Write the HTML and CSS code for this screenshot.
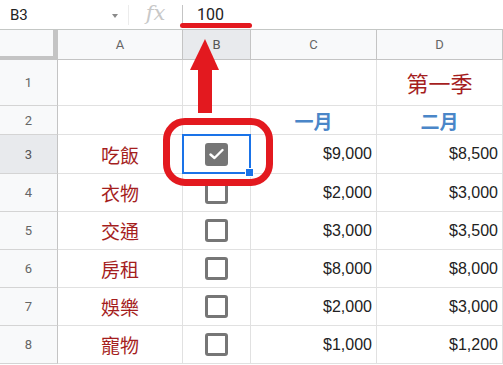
FILE: index.html
```html
<!DOCTYPE html>
<html lang="zh-Hant">
<head>
    <meta charset="UTF-8">
    <meta name="viewport" content="width=device-width, initial-scale=1.0">
    <title>試算表</title>
    <link rel="stylesheet" href="styles.css">
</head>
<body>
<div class="formula-bar">
    <div class="namebox">
        <span>B3</span>
        <span class="caret"></span>
    </div>
    <div class="sep"></div>
    <div class="fx">fx</div>
    <div class="sep tall"></div>
    <div class="value">100</div>
</div>

<div class="sheet">
    <!-- header row -->
    <div class="corner"></div>
    <div class="col-head">A</div>
    <div class="col-head active">B</div>
    <div class="col-head">C</div>
    <div class="col-head">D</div>

    <!-- row 1 -->
    <div class="row-head">1</div>
    <div class="cell"></div>
    <div class="cell"></div>
    <div class="cell"></div>
    <div class="cell title">第一季</div>

    <!-- row 2 -->
    <div class="row-head">2</div>
    <div class="cell"></div>
    <div class="cell"></div>
    <div class="cell month">一月</div>
    <div class="cell month">二月</div>

    <!-- row 3 -->
    <div class="row-head active">3</div>
    <div class="cell item">吃飯</div>
    <div class="cell box selected">
        <span class="check on">
            <svg width="15" height="12" viewBox="0 0 15 12"><polyline points="1.5,6.5 5.5,10 13.5,2" fill="none" stroke="#fff" stroke-width="2.4" stroke-linecap="round" stroke-linejoin="round"/></svg>
        </span>
        <span class="handle"></span>
    </div>
    <div class="cell num">$9,000</div>
    <div class="cell num">$8,500</div>

    <!-- row 4 -->
    <div class="row-head">4</div>
    <div class="cell item">衣物</div>
    <div class="cell box"><span class="check"></span></div>
    <div class="cell num">$2,000</div>
    <div class="cell num">$3,000</div>

    <!-- row 5 -->
    <div class="row-head">5</div>
    <div class="cell item">交通</div>
    <div class="cell box"><span class="check"></span></div>
    <div class="cell num">$3,000</div>
    <div class="cell num">$3,500</div>

    <!-- row 6 -->
    <div class="row-head">6</div>
    <div class="cell item">房租</div>
    <div class="cell box"><span class="check"></span></div>
    <div class="cell num">$8,000</div>
    <div class="cell num">$8,000</div>

    <!-- row 7 -->
    <div class="row-head">7</div>
    <div class="cell item">娛樂</div>
    <div class="cell box"><span class="check"></span></div>
    <div class="cell num">$2,000</div>
    <div class="cell num">$3,000</div>

    <!-- row 8 -->
    <div class="row-head">8</div>
    <div class="cell item">寵物</div>
    <div class="cell box"><span class="check"></span></div>
    <div class="cell num">$1,000</div>
    <div class="cell num">$1,200</div>
</div>

<!-- annotations drawn over the sheet -->
<div class="underline"></div>
<svg class="arrow" width="30" height="75" viewBox="0 0 30 75">
    <polygon points="15,0 29,31 0,31" fill="#e3191f"/>
    <rect x="8" y="29" width="14" height="45" fill="#e3191f"/>
</svg>
<div class="ring"></div>
</body>
</html>
```
FILE: styles.css
```css
body {
    margin: 0;
    width: 503px;
    height: 365px;
    overflow: hidden;
    background: #fff;
    font-family: Arial, "Liberation Sans", sans-serif;
    position: relative;
}

.formula-bar {
    display: flex;
    align-items: center;
    height: 30px;
    box-sizing: border-box;
    border-bottom: 1px solid #c4c7c5;
}

.namebox {
    width: 128px;
    display: flex;
    align-items: center;
    justify-content: space-between;
    padding: 0 10px 0 10px;
    box-sizing: border-box;
    font-size: 15px;
    color: #222;
    font-family: Roboto, Arial, sans-serif;
}

.caret {
    width: 0;
    height: 0;
    border-left: 3px solid transparent;
    border-right: 3px solid transparent;
    border-top: 4px solid #8a8a8a;
    margin-top: 2px;
}

.sep {
    width: 1px;
    height: 20px;
    background: #ececec;
}

.sep.tall {
    background: #c4c4c4;
    height: 19px;
}

.fx {
    width: 53px;
    text-align: center;
    font-family: "DejaVu Serif", "Liberation Serif", serif;
    font-style: italic;
    font-size: 21px;
    color: #c8c8c8;
    margin-top: -4px;
}

.value {
    padding-left: 14px;
    font-size: 16px;
    color: #222;
    font-family: Roboto, Arial, sans-serif;
}

.sheet {
    display: grid;
    grid-template-columns: 58px 125px 68px 126px 126px;
    grid-template-rows: 30px 46px 29px 39px repeat(5, 38px);
}

.sheet > div {
    box-sizing: border-box;
    border-right: 1px solid #e1e1e1;
    border-bottom: 1px solid #e1e1e1;
    display: flex;
    align-items: center;
    justify-content: center;
}

.corner {
    background: #f8f9fa;
    border-right: 5px solid #c4c4c4 !important;
    border-bottom: 4px solid #c4c4c4 !important;
}

.col-head,
.row-head {
    background: #f8f9fa;
    color: #666;
    font-family: Roboto, Arial, sans-serif;
    font-size: 13px;
}

.sheet > .col-head {
    border-right-color: #c4c4c4;
    border-bottom-color: #c4c4c4;
}

.sheet > .row-head {
    border-right-color: #c4c4c4;
    border-bottom-color: #d4d4d4;
}

.col-head.active,
.row-head.active {
    background: #e8eaed;
    color: #555;
}

.cell {
    font-family: "Noto Sans CJK TC", "Noto Sans", sans-serif;
    font-size: 18px;
}

.title {
    color: #a51e1e;
    font-size: 22px;
    padding-bottom: 2px;
}

.month {
    color: #4a86c8;
    font-size: 19px;
    font-weight: bold;
}

.item {
    color: #a51e1e;
    font-size: 19px;
}

.sheet > .num {
    justify-content: flex-end;
    padding-right: 4px;
    font-family: Arial, "Liberation Sans", sans-serif;
    font-size: 16px;
    color: #222;
}

.box {
    position: relative;
}

.check {
    width: 23px;
    height: 23px;
    box-sizing: border-box;
    border: 3px solid #767676;
    border-radius: 3px;
    display: flex;
    align-items: center;
    justify-content: center;
}

.check.on {
    background: #767676;
}

.selected::after {
    content: "";
    position: absolute;
    left: -1px;
    top: -1px;
    right: -1px;
    bottom: -1px;
    border: 2px solid #1a73e8;
}

.handle {
    position: absolute;
    right: -4px;
    bottom: -4px;
    width: 7px;
    height: 7px;
    background: #1a73e8;
    border: 1px solid #fff;
    z-index: 2;
}

.underline {
    position: absolute;
    left: 180px;
    top: 23px;
    width: 72px;
    height: 5px;
    border-radius: 3px;
    background: #e3191f;
}

.arrow {
    position: absolute;
    left: 190px;
    top: 39px;
}

.ring {
    position: absolute;
    left: 163px;
    top: 118px;
    width: 110px;
    height: 68px;
    box-sizing: border-box;
    border: 7px solid #e3191f;
    border-radius: 22px;
}
```
